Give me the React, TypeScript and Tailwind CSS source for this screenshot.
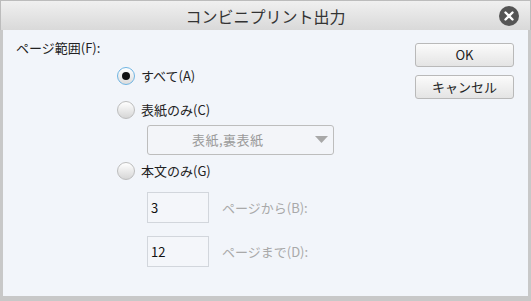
import React from "react";

const font = { fontFamily: '"Noto Sans CJK JP", "Noto Sans", sans-serif' };

const Radio = ({ checked, label }: { checked?: boolean; label: string }) => (
  <div className="flex h-[18px] items-center gap-[6px]">
    <span
      className={
        checked
          ? "flex h-[18px] w-[18px] items-center justify-center rounded-full border border-[#6fb4e2] bg-gradient-to-b from-white to-[#dcdcdc]"
          : "flex h-[18px] w-[18px] items-center justify-center rounded-full border border-[#bdbdbd] bg-gradient-to-b from-white to-[#d6d6d6]"
      }
    >
      {checked && <span className="h-[8px] w-[8px] rounded-full bg-[#111]" />}
    </span>
    <span className="text-[13px] leading-[18px] text-[#222]">{label}</span>
  </div>
);

const PageField = ({ value, label }: { value: string; label: string }) => (
  <div className="flex h-[31px] items-center gap-[13px]">
    <div className="flex h-[31px] w-[62px] items-center border border-[#d2d6dc] bg-[#f4f6fa] pl-[3px] text-[13px] leading-[16px] text-[#111]">
      {value}
    </div>
    <span className="text-[13px] leading-[16px] text-[#a9a9a9]">{label}</span>
  </div>
);

export default function App() {
  return (
    <div className="flex h-[301px] w-[531px] flex-col bg-[#c8c8c8]" style={font}>
      <div className="relative flex h-[30px] shrink-0 items-center justify-center border-x border-t border-[#bcbcbc] bg-gradient-to-b from-[#f0f0f0] to-[#d9d9d9]">
        <span className="text-[16px] leading-none text-[#333]">コンビニプリント出力</span>
        <span className="absolute right-[11px] top-[5px] flex h-[20px] w-[20px] items-center justify-center rounded-full bg-[#555]">
          <svg width="10" height="10" viewBox="0 0 10 10">
            <path d="M1.5 1.5 L8.5 8.5 M8.5 1.5 L1.5 8.5" stroke="#fff" strokeWidth="2.4" strokeLinecap="round" />
          </svg>
        </span>
      </div>
      <div className="mx-[3px] mb-[5px] flex flex-1 bg-[#f2f5fa]">
        <div className="flex flex-1 flex-col">
          <div className="mt-[10px] h-[16px] pl-[13px] text-[13px] leading-[16px] text-[#222]">ページ範囲(F):</div>
          <div className="ml-[114px] mt-[11px] flex flex-col">
            <Radio checked label="すべて(A)" />
            <div className="mt-[16px]">
              <Radio label="表紙のみ(C)" />
            </div>
            <div className="ml-[30px] mt-[6px] flex h-[30px] w-[187px] items-center rounded-[3px] border border-[#bdbdbd] bg-[#f3f5f9]">
              <span className="ml-[44px] flex-1 text-[13px] leading-[16px] tracking-[0.5px] text-[#9a9a9a]">表紙,裏表紙</span>
              <svg width="13" height="8" viewBox="0 0 13 8" className="mr-[5px]">
                <path d="M0 0 H13 L6.5 7 Z" fill="#a8a8a8" />
              </svg>
            </div>
            <div className="mt-[7px]">
              <Radio label="本文のみ(G)" />
            </div>
            <div className="ml-[30px] mt-[12px] flex flex-col gap-[13px]">
              <PageField value="3" label="ページから(B):" />
              <PageField value="12" label="ページまで(D):" />
            </div>
          </div>
        </div>
        <div className="mr-[14px] mt-[13px] flex flex-col gap-[8px]">
          <button className="h-[24px] w-[99px] rounded-[3px] border border-[#b9b9b9] bg-gradient-to-b from-[#fbfbfb] to-[#e4e4e4] text-[13px] leading-[16px] text-[#222]">
            OK
          </button>
          <button className="h-[24px] w-[99px] rounded-[3px] border border-[#b9b9b9] bg-gradient-to-b from-[#fbfbfb] to-[#e4e4e4] text-[13px] leading-[16px] text-[#222]">
            キャンセル
          </button>
        </div>
      </div>
    </div>
  );
}
